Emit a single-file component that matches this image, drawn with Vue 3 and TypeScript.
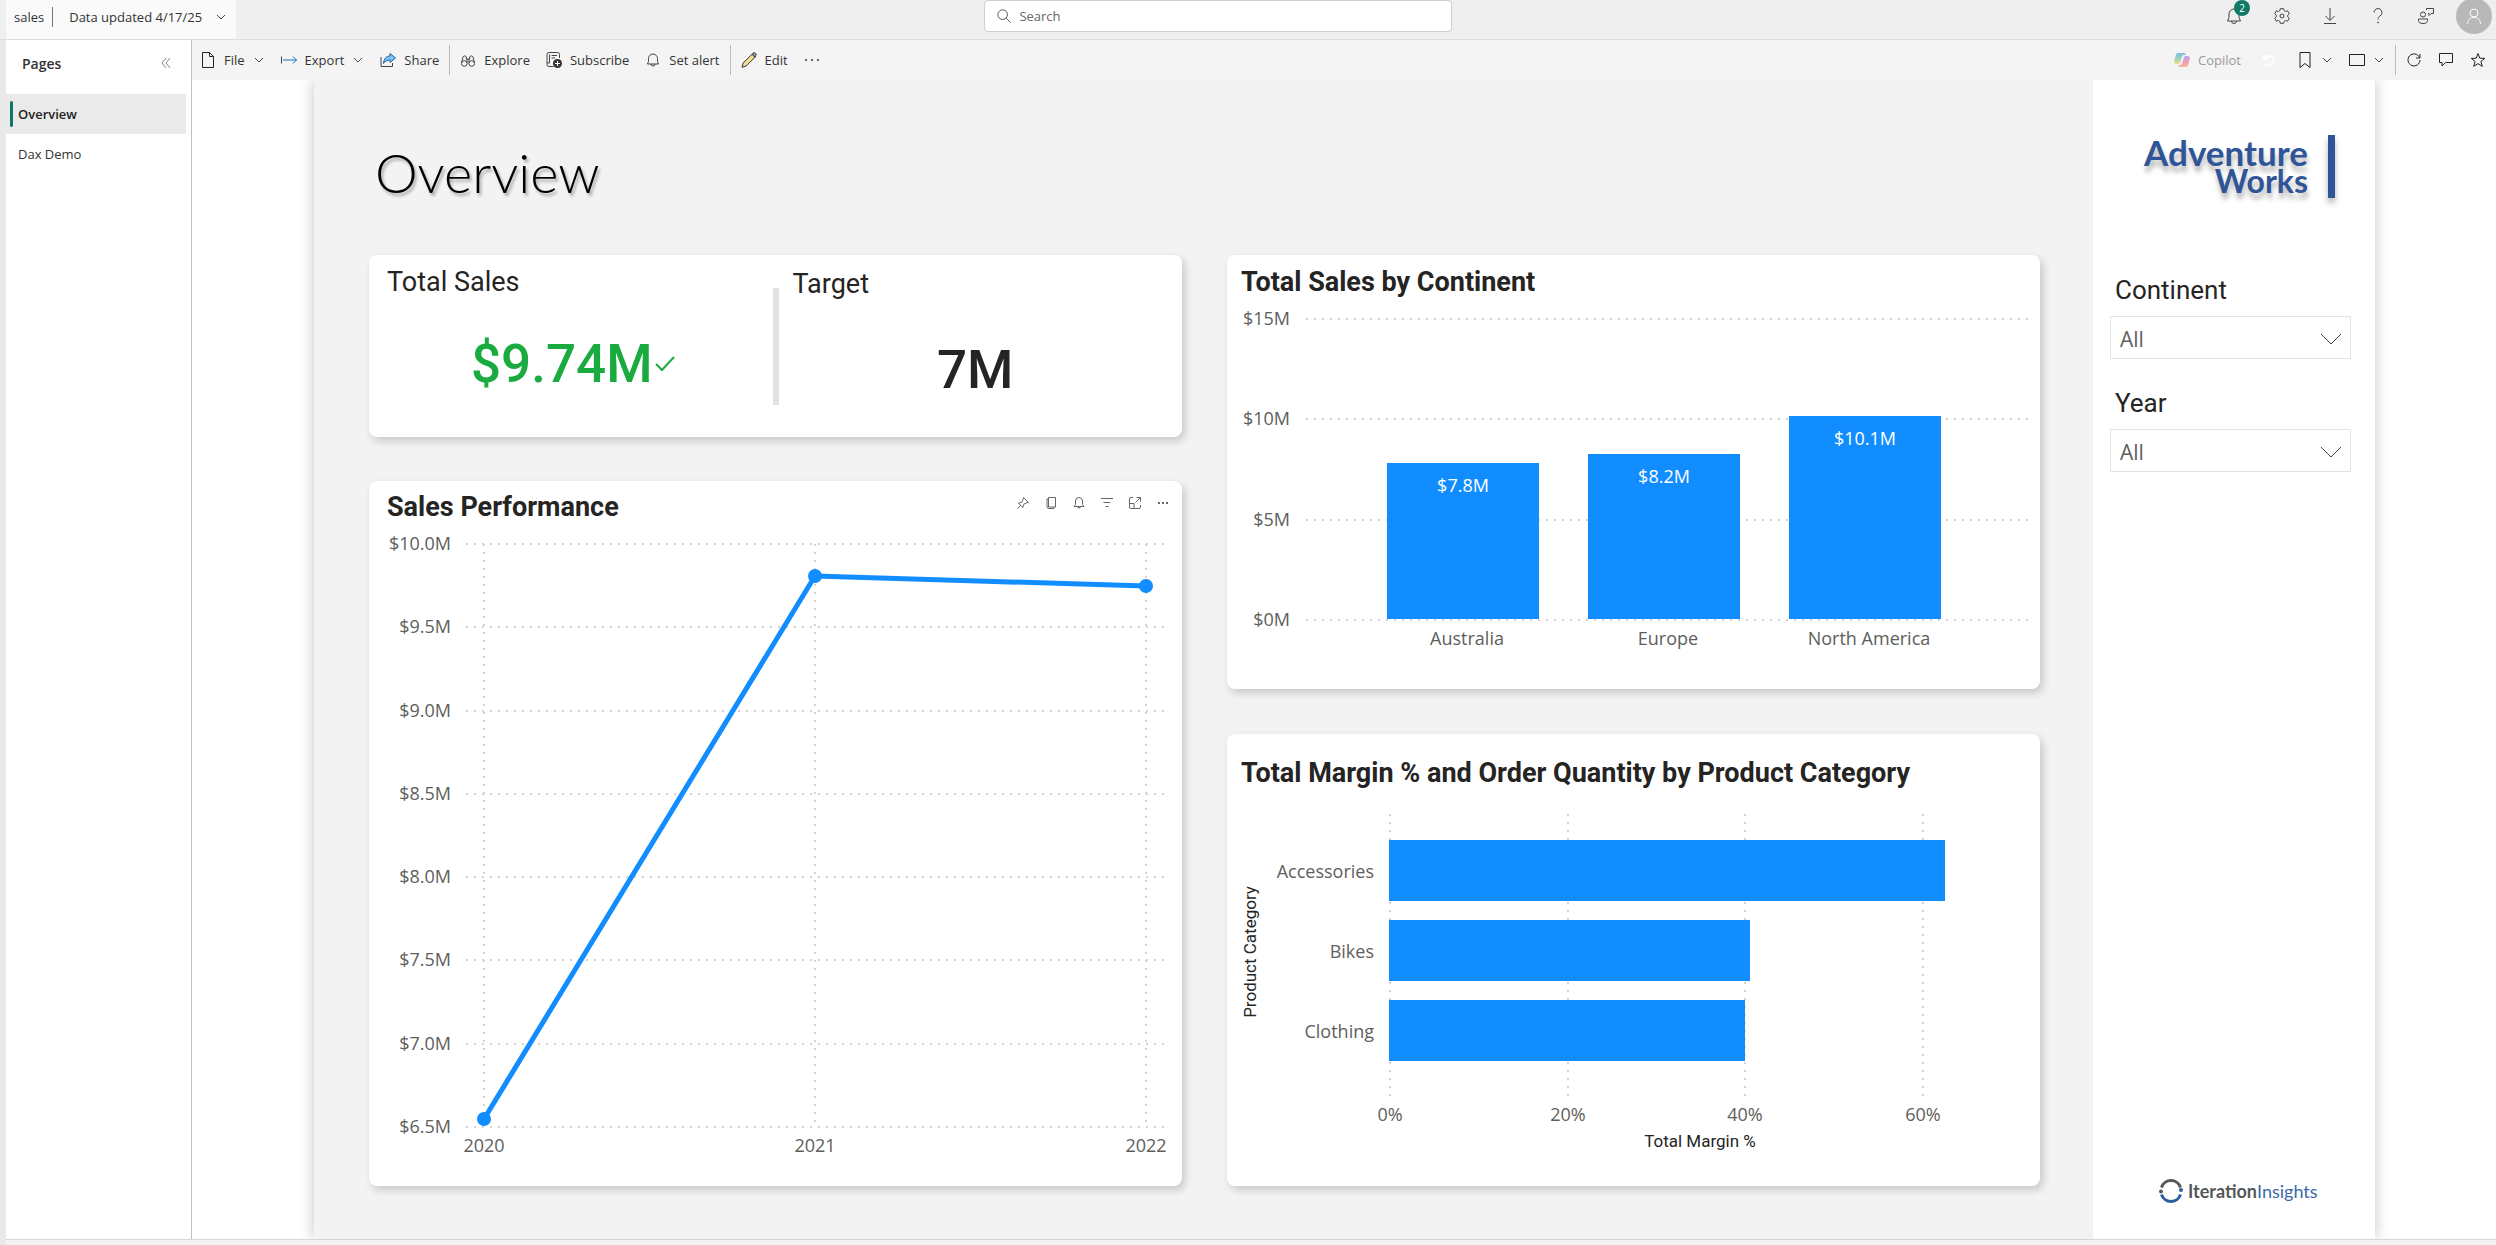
<script setup lang="ts">
import { ref } from 'vue'

interface Point { year: string; sales: number }
interface Continent { name: string; sales: number; label: string }
interface Category { name: string; margin: number }

const pages: string[] = ['Overview', 'Dax Demo']
const activePage = ref<string>('Overview')
const query = ref<string>('')
const continent = ref<string>('All')
const year = ref<string>('All')

// Sales Performance line chart
const performance: Point[] = [
  { year: '2020', sales: 6.55 },
  { year: '2021', sales: 9.81 },
  { year: '2022', sales: 9.75 },
]
const performanceTicks: number[] = [10, 9.5, 9, 8.5, 8, 7.5, 7, 6.5]
const perfX = (i: number): number => 115 + i * 331
const perfY = (v: number): number => Math.round(604 - ((v - 6.5) * 583) / 3.5)
const perfLine: string = performance.map((p, i) => `${perfX(i)},${perfY(p.sales)}`).join(' ')

// Total Sales by Continent column chart
const continents: Continent[] = [
  { name: 'Australia', sales: 7.8, label: '$7.8M' },
  { name: 'Europe', sales: 8.25, label: '$8.2M' },
  { name: 'North America', sales: 10.15, label: '$10.1M' },
]
const salesTicks: number[] = [15, 10, 5, 0]
const colX = (i: number): number => 160 + i * 201
const salesY = (v: number): number => Math.round(322 - (v * 301) / 15)

// Total Margin % bar chart
const categories: Category[] = [
  { name: 'Accessories', margin: 62.5 },
  { name: 'Bikes', margin: 40.6 },
  { name: 'Clothing', margin: 40 },
]
const marginTicks: number[] = [0, 20, 40, 60]
const marginX = (v: number): number => Math.round(163 + v * 8.875)
const rowY = (i: number): number => 51 + i * 80
</script>

<template>
  <div class="app">
    <header class="topbar">
      <div class="crumbs">
        <a href="#" class="crumb">sales</a>
        <button type="button" class="updated">
          Data updated 4/17/25
          <svg class="chev" viewBox="0 0 10 10"><path d="M1 3l4 4 4-4" /></svg>
        </button>
      </div>
      <label class="search">
        <svg viewBox="0 0 16 16"><circle cx="6.5" cy="6.5" r="5.5" /><path d="M10.5 10.5l5 5" /></svg>
        <input v-model="query" type="search" placeholder="Search" aria-label="Search" />
      </label>
      <nav class="account">
        <button type="button" aria-label="Notifications" class="notify">
          <svg viewBox="0 0 16 16"><path d="M8 1a5 5 0 0 0-5 5v3.500L1.500 13h13L13 9.500V6a5 5 0 0 0-5-5zM5.500 13a2.500 2.500 0 0 0 5 0" /></svg>
          <span class="badge">2</span>
        </button>
        <button type="button" aria-label="Settings">
          <svg viewBox="0 0 16 16"><circle cx="8" cy="8" r="2" /><path d="M6.300.7h3.400l.5 2 1.300.8 2.100-.7 1.700 2.900-1.600 1.500v1.600l1.600 1.500-1.700 2.900-2.100-.7-1.300.8-.5 2H6.300l-.5-2-1.300-.8-2.100.7L.7 10.300l1.600-1.500V7.200L.7 5.700l1.700-2.900 2.100.7 1.300-.8z" /></svg>
        </button>
        <button type="button" aria-label="Download">
          <svg viewBox="0 0 16 16"><path d="M8 0v12M3.500 8L8 12.500 12.500 8M2 15.500h12" /></svg>
        </button>
        <button type="button" aria-label="Help">
          <svg viewBox="0 0 16 16"><path d="M4 4.500a4 4 0 1 1 6 3.500c-1.500 1-2 1.600-2 3.500" /><circle cx="8" cy="14.500" r=".5" /></svg>
        </button>
        <button type="button" aria-label="Feedback">
          <svg viewBox="0 0 16 16"><circle cx="5" cy="6.500" r="2.500" /><path d="M.5 11h9v1.500a4.500 3 0 0 1-9 0zM8.500.5h7v5h-2.500L11 7.500v-2h-1M8.500.5V2" /></svg>
        </button>
        <button type="button" aria-label="Account" class="avatar">
          <svg viewBox="0 0 16 16"><circle cx="8" cy="5" r="4" /><path d="M1.500 16c0-4 2.500-6.500 6.500-6.500s6.500 2.500 6.500 6.500" /></svg>
        </button>
      </nav>
    </header>

    <div class="body">
      <aside class="pages">
        <div class="pages-head">
          <h2>Pages</h2>
          <button type="button" aria-label="Collapse pages">
            <svg viewBox="0 0 10 10"><path d="M5 0L1 5l4 5M9 0L5 5l4 5" /></svg>
          </button>
        </div>
        <a
          v-for="p in pages"
          :key="p"
          href="#"
          class="page"
          :class="{ active: p === activePage }"
          @click.prevent="activePage = p"
        >{{ p }}</a>
      </aside>

      <div class="work">
        <div class="toolbar">
          <button type="button">
            <svg viewBox="0 0 16 16" class="dark"><path d="M2.500.5h7l4 4v11h-11zM9.500.5v4h4" /></svg>
            File
            <svg class="chev" viewBox="0 0 10 10"><path d="M1 3l4 4 4-4" /></svg>
          </button>
          <button type="button">
            <svg viewBox="0 0 16 16"><path d="M.5 4.500v7" /><path class="blue" d="M2 8h13.500M12 4.500L15.500 8 12 11.500" /></svg>
            Export
            <svg class="chev" viewBox="0 0 10 10"><path d="M1 3l4 4 4-4" /></svg>
          </button>
          <button type="button">
            <svg viewBox="0 0 16 16"><path class="thick" d="M1 5v9.500h11.500V11" /><path class="sharefill" d="M10 1.500L15.500 6 10 10.500V8C7 8 5 9 3.500 11.500 3.800 7 6 4.200 10 4z" /></svg>
            Share
          </button>
          <span class="sep"></span>
          <button type="button">
            <svg viewBox="0 0 16 16"><circle cx="4.300" cy="11.500" r="2.800" /><circle cx="11.700" cy="11.500" r="2.800" /><path d="M1.500 11l1.500-6c.3-1.500 3-1.500 3.300 0V7h3.400V5c.3-1.500 3-1.500 3.300 0l1.500 6M7 7v4M9 7v4" /></svg>
            Explore
          </button>
          <button type="button">
            <svg viewBox="0 0 16 16"><path d="M7.500 14.500H3A2 2 0 0 1 1 12.500V2.500a2 2 0 0 1 2-2h8.500a2 2 0 0 1 2 2V6M1 11h2.500V2.500M5.500 3.500h5.500M5.500 6h3.500" /><circle class="solid" cx="11.500" cy="11.500" r="4.500" /><path class="plus" d="M11.500 9v5M9 11.500h5" /></svg>
            Subscribe
          </button>
          <button type="button">
            <svg viewBox="0 0 16 16"><path d="M8 2a4.500 4.500 0 0 0-4.500 4.500v3L2.500 12h11l-1-2.500v-3A4.500 4.500 0 0 0 8 2zM6 12a2 2 0 0 0 4 0" /></svg>
            Set alert
          </button>
          <span class="sep"></span>
          <button type="button">
            <svg viewBox="0 0 16 16"><path class="pencil" d="M1 15.300l1.200-4.300L11 2.200l3 3L5.200 14z" /><path class="tip" d="M11 2.200l1-1c1.500-1.400 4 .9 2.800 2.300L14 5.200z" /></svg>
            Edit
          </button>
          <button type="button" aria-label="More options">
            <svg viewBox="0 0 16 16"><g class="solid"><circle cx="2" cy="8" r="1" /><circle cx="8" cy="8" r="1" /><circle cx="14" cy="8" r="1" /></g></svg>
          </button>

          <div class="tools">
            <button type="button" class="copilot" disabled>
              <svg viewBox="0 0 16 16">
                <defs>
                  <linearGradient id="cool" x1="0" y1="0" x2="0" y2="1"><stop offset="0" stop-color="#79bfe8" /><stop offset=".6" stop-color="#a3d9b0" /><stop offset="1" stop-color="#f5d98a" /></linearGradient>
                  <linearGradient id="warm" x1="0" y1="0" x2="0" y2="1"><stop offset="0" stop-color="#b9a3ec" /><stop offset=".5" stop-color="#ee9dba" /><stop offset="1" stop-color="#f7b98e" /></linearGradient>
                </defs>
                <path class="cool" d="M4 1h6c1 0 1.500.8 1.800 2H10C8.500 3 8 4 7.500 6L6.500 9.500C6 11 5.500 12 4 12H2.500C.5 12-.3 10.500.3 8.500L1.800 3C2.200 1.700 2.800 1 4 1z" />
                <path class="warm" d="M12 15H6c-1 0-1.500-.8-1.800-2H6c1.500 0 2-1 2.500-3l1-3.500C10 5 10.500 4 12 4h1.500c2 0 2.800 1.500 2.200 3.500L14.200 13c-.4 1.300-1 2-2.200 2z" />
              </svg>
              Copilot
            </button>
            <button type="button" class="ghost" aria-label="Reset" disabled>
              <svg viewBox="0 0 16 16"><path d="M3 3v4h4M3.500 6.500A5 5 0 1 1 4 12" /></svg>
            </button>
            <button type="button" aria-label="Bookmarks">
              <svg viewBox="0 0 16 16" class="dark"><path d="M3 .5h10v15l-5-4-5 4z" /></svg>
              <svg class="chev" viewBox="0 0 10 10"><path d="M1 3l4 4 4-4" /></svg>
            </button>
            <button type="button" aria-label="View">
              <svg viewBox="0 0 16 16" class="dark"><path d="M.5 2.500h15v11H.5z" /></svg>
              <svg class="chev" viewBox="0 0 10 10"><path d="M1 3l4 4 4-4" /></svg>
            </button>
            <span class="sep"></span>
            <button type="button" aria-label="Refresh">
              <svg viewBox="0 0 16 16" class="dark"><path d="M13.500 5.500A6 6 0 1 0 14 8M14 2v4h-4" /></svg>
            </button>
            <button type="button" aria-label="Comment">
              <svg viewBox="0 0 16 16" class="dark"><path d="M1.500 1.500h13v9H7.500L4 14v-3.500H1.500z" /></svg>
            </button>
            <button type="button" aria-label="Favorite">
              <svg viewBox="0 0 16 16" class="dark"><path d="M8 1.500l1.800 4.700 5 .2-3.900 3.100 1.400 4.900L8 11.600l-4.300 2.800 1.400-4.900-3.900-3.100 5-.2z" /></svg>
            </button>
          </div>
        </div>

        <main class="canvas">
          <div class="report">
            <section class="visuals">
              <h1>Overview</h1>
              <div class="columns">
                <div class="column">
                  <article class="card kpis">
                    <div class="kpi">
                      <h3>Total Sales</h3>
                      <p class="good">
                        $9.74M<svg viewBox="0 0 20 16"><path d="M1 8l6 6L19 1" /></svg>
                      </p>
                    </div>
                    <div class="kpi-line"></div>
                    <div class="kpi target">
                      <h3>Target</h3>
                      <p>7M</p>
                    </div>
                  </article>

                  <article class="card line-card">
                    <div class="card-head">
                      <h2>Sales Performance</h2>
                      <div class="actions">
                        <button type="button" aria-label="Pin visual"><svg viewBox="0 0 12 12"><path d="M.5 11.500L3.500 8.500M1.500 6.200l4.300 4.300 1-3.300 2.900-1.400 1.800-.3L6.500.5l-.3 1.800-1.400 2.900z" /></svg></button>
                        <button type="button" aria-label="Copy visual"><svg viewBox="0 0 12 12"><path d="M3.500.5h7v9.500h-7zM3.500 2H2v7.500a2 2 0 0 0 2 2h5V10" /></svg></button>
                        <button type="button" aria-label="Set alert"><svg viewBox="0 0 12 12"><path d="M6 .5A3.500 3.500 0 0 0 2.500 4v3.500L1 9.500h10L9.500 7.500V4A3.500 3.500 0 0 0 6 .5zM4.500 9.500a1.500 1.500 0 0 0 3 0" /></svg></button>
                        <button type="button" aria-label="Filters"><svg viewBox="0 0 12 12"><path d="M0 1.500h12M2.500 5.500h7M4.500 9.500h3" /></svg></button>
                        <button type="button" aria-label="Focus mode"><svg viewBox="0 0 12 12"><path d="M4 .5H2A1.500 1.500 0 0 0 .5 2v8A1.500 1.500 0 0 0 2 11.500h8a1.500 1.500 0 0 0 1.500-1.500V8M.5 6.500H5v5M6.500 5.500l5-5M7.500.5h4v4" /></svg></button>
                        <button type="button" aria-label="More options"><svg viewBox="0 0 12 12"><g class="solid"><circle cx="2" cy="6" r="1" /><circle cx="6" cy="6" r="1" /><circle cx="10" cy="6" r="1" /></g></svg></button>
                      </div>
                    </div>
                    <svg class="chart" viewBox="0 0 813 663" role="img" aria-label="Sales Performance">
                      <g v-for="t in performanceTicks" :key="t">
                        <line class="grid" x1="97" x2="796" :y1="perfY(t)" :y2="perfY(t)" />
                        <text class="tick" x="82" :y="perfY(t) + 6" text-anchor="end">${{ t.toFixed(1) }}M</text>
                      </g>
                      <g v-for="(p, i) in performance" :key="p.year">
                        <line class="grid" :x1="perfX(i)" :x2="perfX(i)" y1="21" y2="604" />
                        <text class="tick" :x="perfX(i)" y="629" text-anchor="middle">{{ p.year }}</text>
                      </g>
                      <polyline class="series" :points="perfLine" />
                      <circle v-for="(p, i) in performance" :key="p.year" class="mark" :cx="perfX(i)" :cy="perfY(p.sales)" r="7" />
                    </svg>
                  </article>
                </div>

                <div class="column">
                  <article class="card column-card">
                    <div class="card-head"><h2>Total Sales by Continent</h2></div>
                    <svg class="chart" viewBox="0 0 813 391" role="img" aria-label="Total Sales by Continent">
                      <g v-for="t in salesTicks" :key="t">
                        <line class="grid" x1="79" x2="801" :y1="salesY(t)" :y2="salesY(t)" />
                        <text class="tick" x="63" :y="salesY(t) + 6" text-anchor="end">${{ t }}M</text>
                      </g>
                      <g v-for="(c, i) in continents" :key="c.name">
                        <rect class="mark" :x="colX(i)" :y="salesY(c.sales)" width="152" :height="321 - salesY(c.sales)" />
                        <text class="value" :x="colX(i) + 76" :y="salesY(c.sales) + 29" text-anchor="middle">{{ c.label }}</text>
                        <text class="tick" :x="colX(i) + 80" y="347" text-anchor="middle">{{ c.name }}</text>
                      </g>
                    </svg>
                  </article>

                  <article class="card bar-card">
                    <div class="card-head"><h2>Total Margin % and Order Quantity by Product Category</h2></div>
                    <svg class="chart" viewBox="0 0 813 397" role="img" aria-label="Total Margin % by Product Category">
                      <g v-for="t in marginTicks" :key="t">
                        <line class="grid" :x1="marginX(t)" :x2="marginX(t)" y1="25" y2="309" />
                        <text class="tick" :x="marginX(t)" y="332" text-anchor="middle">{{ t }}%</text>
                      </g>
                      <g v-for="(c, i) in categories" :key="c.name">
                        <rect class="mark" x="162" :y="rowY(i)" :width="marginX(c.margin) - 162" height="61" />
                        <text class="tick" x="147" :y="rowY(i) + 38" text-anchor="end">{{ c.name }}</text>
                      </g>
                      <text class="axis" x="473" y="358" text-anchor="middle">Total Margin %</text>
                      <text class="axis" transform="translate(29 163) rotate(-90)" text-anchor="middle">Product Category</text>
                    </svg>
                  </article>
                </div>
              </div>
            </section>

            <aside class="filters">
              <div class="brand">
                <div class="brand-name"><span class="big">Adventure</span><span class="small">Works</span></div>
                <div class="brand-bar"></div>
              </div>
              <div class="filter">
                <label for="continent">Continent</label>
                <div class="select">
                  <select id="continent" v-model="continent">
                    <option>All</option>
                    <option v-for="c in continents" :key="c.name">{{ c.name }}</option>
                  </select>
                  <svg viewBox="0 0 20 12"><path d="M0 1l10 10L20 1" /></svg>
                </div>
              </div>
              <div class="filter">
                <label for="year">Year</label>
                <div class="select">
                  <select id="year" v-model="year">
                    <option>All</option>
                    <option v-for="p in performance" :key="p.year">{{ p.year }}</option>
                  </select>
                  <svg viewBox="0 0 20 12"><path d="M0 1l10 10L20 1" /></svg>
                </div>
              </div>
              <div class="vendor">
                <svg viewBox="0 0 24 24">
                  <path class="arc gray" d="M2.500 8.500a10 10 0 0 1 19 0" />
                  <path class="arc navy" d="M2.500 15.500a10 10 0 0 0 19 0" />
                  <circle class="dot-gray" cx="2" cy="12.500" r="2" />
                  <circle class="dot-navy" cx="22" cy="11" r="2" />
                </svg>
                <span><b>Iteration</b>Insights</span>
              </div>
            </aside>
          </div>
        </main>
      </div>
    </div>
    <footer class="status"></footer>
  </div>
</template>

<style>
body {
  margin: 0;
}
</style>

<style scoped>
.app {
  box-sizing: border-box;
  display: flex;
  flex-direction: column;
  min-height: 100vh;
  padding-left: 6px;
  background: #e9e9e9;
  color: #333;
  font-family: "Open Sans", "Noto Sans", sans-serif;
  font-size: 13px;
}
*,
*::before {
  box-sizing: border-box;
}
h1, h2, h3, p {
  margin: 0;
}
a {
  color: inherit;
  text-decoration: none;
}
button {
  display: inline-flex;
  align-items: center;
  padding: 0;
  border: 0;
  background: none;
  color: inherit;
  font: inherit;
  white-space: nowrap;
}
svg {
  display: block;
  flex: none;
  fill: none;
  stroke: #444;
  overflow: visible;
}
svg text {
  stroke: none;
}
.solid {
  fill: #333;
  stroke: none;
}
.dark {
  stroke: #222;
}
.chev {
  width: 10px;
  height: 10px;
}

/* Top bar */
.topbar {
  display: grid;
  grid-template-columns: 15fr 468px 16fr;
  height: 40px;
  margin-left: -6px;
  padding-left: 6px;
  border-bottom: 1px solid #dedede;
  background: #efefef;
}
.crumbs {
  display: flex;
  align-items: center;
  justify-self: start;
  width: 230px;
  padding: 0 10px 6px 8px;
  background: #fafafa;
}
.crumb {
  padding-right: 8px;
  border-right: 1px solid #777;
  line-height: 20px;
}
.updated {
  flex: 1;
  justify-content: space-between;
  padding-left: 16px;
}
.search {
  display: flex;
  align-items: center;
  gap: 6px;
  height: 32px;
  padding: 0 12px;
  border: 1px solid #cfcfcf;
  border-radius: 4px;
  background: #fff;
}
.search svg {
  width: 14px;
  height: 14px;
}
.search input {
  flex: 1;
  min-width: 0;
  border: 0;
  outline: 0;
  background: none;
  font: inherit;
}
.search input::placeholder {
  color: #666;
}
.account {
  display: flex;
  justify-content: flex-end;
  gap: 32px;
  height: 32px;
  padding-right: 4px;
}
.account svg {
  width: 16px;
  height: 16px;
}
.notify {
  position: relative;
}
.badge {
  position: absolute;
  top: 0;
  left: 8px;
  width: 16px;
  height: 16px;
  border-radius: 8px;
  background: #117865;
  color: #fff;
  font-size: 10px;
  line-height: 16px;
  text-align: center;
}
.account .avatar {
  justify-content: center;
  align-self: center;
  width: 36px;
  height: 36px;
  margin-left: -10px;
  border-radius: 18px;
  background: #b8b8b8;
}
.avatar svg {
  stroke: #fff;
}

/* Pages pane */
.body {
  display: flex;
  flex: 1;
}
.pages {
  width: 186px;
  border-right: 1px solid #c0c0c0;
  background: #fff;
}
.pages-head {
  display: flex;
  align-items: center;
  justify-content: space-between;
  height: 54px;
  padding: 0 20px 8px 16px;
}
.pages-head h2 {
  font-size: 14px;
  font-weight: 600;
}
.pages-head svg {
  width: 10px;
  height: 10px;
  stroke: #888;
}
.page {
  display: flex;
  align-items: center;
  height: 40px;
  margin-right: 5px;
  padding-left: 12px;
}
.page.active {
  padding-left: 4px;
  background: #eaeaea;
  color: #222;
  font-weight: 600;
}
.page.active::before {
  content: "";
  width: 3px;
  height: 26px;
  margin-right: 5px;
  border-radius: 2px;
  background: #117865;
}

/* Report toolbar */
.work {
  display: flex;
  flex: 1;
  flex-direction: column;
  min-width: 0;
}
.toolbar {
  display: flex;
  align-items: center;
  gap: 16px;
  height: 40px;
  padding: 0 10px 0 8px;
  background: #f4f4f4;
}
.toolbar button {
  gap: 8px;
}
.toolbar svg:not(.chev) {
  width: 16px;
  height: 16px;
}
.toolbar .chev {
  margin: 0 1px;
}
.sep {
  width: 1px;
  height: 30px;
  margin: 0 -6px;
  background: #bbb;
}
.blue {
  stroke: #1a73b8;
}
.sharefill {
  fill: #7cc0f5;
  stroke: #1464a5;
}
.plus {
  stroke: #fff;
}
.pencil {
  fill: #f3dc91;
  stroke: #333;
}
.tip {
  fill: #b493b8;
  stroke: #333;
}
.tools {
  display: flex;
  align-items: center;
  gap: 16px;
  margin-left: auto;
}
.copilot,
.ghost {
  margin-right: 4px;
}
.copilot {
  color: #9a9a9a;
}
.copilot svg {
  stroke: none;
}
.cool {
  fill: url(#cool);
}
.warm {
  fill: url(#warm);
}
.ghost svg {
  stroke: #fff;
  stroke-width: 2px;
}

/* Canvas */
.canvas {
  display: flex;
  flex: 1;
  padding: 0 121px 0 122px;
  overflow: hidden;
  background: #fff;
}
.report {
  display: flex;
  flex: 1;
  background: #f3f3f3;
  box-shadow: 0 0 14px rgba(0, 0, 0, 0.24);
}
.visuals {
  display: flex;
  flex: 1;
  flex-direction: column;
  padding: 60px 53px 53px 55px;
}
h1 {
  height: 115px;
  padding-left: 6px;
  color: #000;
  font-family: Lato, "Open Sans", sans-serif;
  font-size: 54px;
  font-weight: 300;
  line-height: 66px;
  text-shadow: 2px 3px 3px rgba(0, 0, 0, 0.3);
}
.columns {
  display: grid;
  grid-template-columns: 1fr 1fr;
  flex: 1;
  gap: 45px;
}
.column {
  display: flex;
  flex-direction: column;
  gap: 44px;
}
.column:last-child {
  gap: 45px;
}
.card {
  border-radius: 8px;
  background: #fff;
  box-shadow: 3px 4px 8px rgba(0, 0, 0, 0.18);
}
.card h2,
.card h3,
.filter label {
  color: #252423;
  font-family: Roboto, "Liberation Sans", sans-serif;
  font-size: 27px;
  font-weight: 400;
  line-height: 32px;
}
.card h2 {
  font-weight: 700;
}
.kpis {
  display: grid;
  grid-template-columns: 1fr 6px 1fr;
  flex: 1;
}
.kpi {
  padding: 11px 0 0 18px;
}
.kpi p {
  display: flex;
  align-items: center;
  justify-content: center;
  gap: 2px;
  margin: 34px 14px 0 0;
  color: #252423;
  font-family: Roboto, "Liberation Sans", sans-serif;
  font-size: 53px;
  font-weight: 500;
  line-height: 64px;
}
.kpi .good {
  color: #1aab40;
}
.kpi svg {
  width: 20px;
  height: 16px;
  stroke: #1aab40;
  stroke-width: 2px;
}
.kpi.target {
  padding: 13px 0 0 14px;
}
.target p {
  margin: 38px 24px 0 0;
}
.kpi-line {
  margin: 33px 0 32px;
  background: #e2e2e2;
}
.card-head {
  display: flex;
  justify-content: space-between;
  padding: 11px 14px 0;
}
.line-card .card-head {
  padding: 10px 13px 0 18px;
}
.bar-card .card-head {
  padding-top: 23px;
}
.actions {
  display: flex;
  gap: 16px;
  height: 24px;
}
.actions svg {
  width: 12px;
  height: 12px;
  stroke: #666;
}
.chart {
  width: 100%;
  height: auto;
}
.grid {
  stroke: #d4d4d4;
  stroke-width: 2px;
  stroke-dasharray: 2 6;
}
.tick,
.value {
  fill: #605e5c;
  font-size: 18px;
}
.value {
  fill: #fff;
}
.axis {
  fill: #252423;
  font-family: Roboto, "Liberation Sans", sans-serif;
  font-size: 17px;
}
.mark {
  fill: #118dff;
  stroke: none;
}
.series {
  stroke: #118dff;
  stroke-width: 5px;
  stroke-linejoin: round;
}

/* Filter panel */
.filters {
  display: flex;
  flex-direction: column;
  width: 282px;
  padding: 55px 24px 36px 17px;
  background: #fff;
}
.brand {
  display: flex;
  justify-content: flex-end;
  gap: 20px;
  padding-right: 16px;
  margin-bottom: 76px;
}
.brand-name {
  display: flex;
  flex-direction: column;
  align-items: flex-end;
  color: #2f5597;
  font-family: Lato, "Open Sans", sans-serif;
  font-weight: 700;
  text-shadow: 1px 6px 5px rgba(0, 0, 0, 0.28);
}
.big {
  font-size: 35px;
  line-height: 34px;
}
.small {
  font-size: 32px;
  line-height: 24px;
}
.brand-bar {
  width: 7px;
  height: 63px;
  background: #2f5597;
  box-shadow: 0 5px 6px rgba(0, 0, 0, 0.3);
}
.filter {
  margin-bottom: 28px;
}
.filter label {
  display: block;
  height: 42px;
  padding-left: 5px;
  font-size: 26px;
}
.select {
  position: relative;
}
.select select {
  display: block;
  width: 100%;
  height: 43px;
  padding: 2px 9px 0;
  border: 1px solid #e3e3e3;
  border-radius: 0;
  background: #fff;
  color: #605e5c;
  font: inherit;
  font-size: 21px;
  appearance: none;
}
.select svg {
  position: absolute;
  top: 17px;
  right: 10px;
  width: 20px;
  height: 12px;
  pointer-events: none;
}
.vendor {
  display: flex;
  align-items: center;
  gap: 5px;
  margin-top: auto;
  padding-left: 49px;
  color: #3a69a8;
  font-family: Lato, "Open Sans", sans-serif;
  font-size: 18px;
  line-height: 22px;
}
.vendor b {
  color: #54585a;
  font-weight: 700;
}
.vendor svg {
  width: 24px;
  height: 24px;
}
.arc {
  stroke-width: 3px;
}
.gray {
  stroke: #54585a;
}
.navy {
  stroke: #2f5e9e;
}
.dot-gray {
  fill: #54585a;
  stroke: none;
}
.dot-navy {
  fill: #2f5e9e;
  stroke: none;
}
.status {
  height: 6px;
  border-top: 1px solid #d6d6d6;
  background: #f3f3f3;
}
</style>
